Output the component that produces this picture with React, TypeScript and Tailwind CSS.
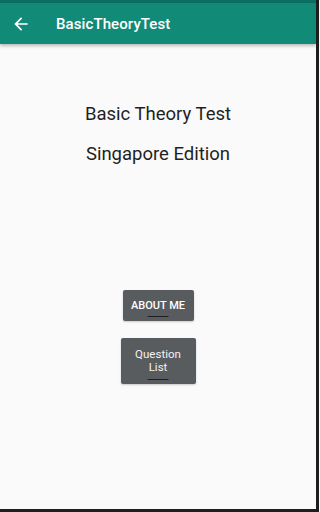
import React from "react";

export default function App() {
  return (
    <div
      className="w-[319px] h-[512px] bg-[#fafafa] flex flex-col overflow-hidden border-r-[3px] border-b-[3px] border-r-[#1e1e1e] border-b-[#1e1e1e]"
      style={{ fontFamily: "Roboto, 'Noto Sans', sans-serif" }}
    >
      <div className="h-[3px] bg-[#0b6f61] shrink-0" />
      <div className="h-[41px] bg-[#128a78] flex items-center shrink-0 shadow-[0_2px_3px_rgba(0,0,0,0.25)] relative z-10">
        <div className="w-[42px] flex justify-center items-center">
          <svg width="20" height="20" viewBox="0 0 24 24" fill="none">
            <path
              d="M20 11H7.83l5.59-5.59L12 4l-8 8 8 8 1.41-1.41L7.83 13H20v-2z"
              fill="#ffffff"
            />
          </svg>
        </div>
        <span className="ml-[14px] text-white text-[15px] font-medium leading-none tracking-[0.1px] pt-[1px]">
          BasicTheoryTest
        </span>
      </div>
      <div className="flex flex-col items-center">
        <div className="mt-[57px] text-[18.5px] leading-[26px] text-[#1f1f1f]">
          Basic Theory Test
        </div>
        <div className="mt-[14px] text-[18.5px] leading-[26px] text-[#1f1f1f]">
          Singapore Edition
        </div>
        <button className="mt-[123px] w-[71px] h-[31px] bg-[#595c5f] rounded-[2px] text-white text-[11px] font-medium flex flex-col items-center justify-center relative shadow-[0_1px_2px_rgba(0,0,0,0.2)]">
          <span className="leading-none">ABOUT ME</span>
          <span className="absolute bottom-[4px] left-1/2 -translate-x-1/2 w-[21px] h-[1.5px] bg-[#1f1f1f]" />
        </button>
        <button className="mt-[17px] w-[75px] h-[46px] bg-[#595c5f] rounded-[2px] text-[#f2f2f2] text-[11.5px] flex flex-col items-center justify-center relative shadow-[0_1px_2px_rgba(0,0,0,0.2)]">
          <span className="leading-[13px]">Question</span>
          <span className="leading-[13px]">List</span>
          <span className="absolute bottom-[4px] left-1/2 -translate-x-1/2 w-[21px] h-[1.5px] bg-[#1f1f1f]" />
        </button>
      </div>
    </div>
  );
}
